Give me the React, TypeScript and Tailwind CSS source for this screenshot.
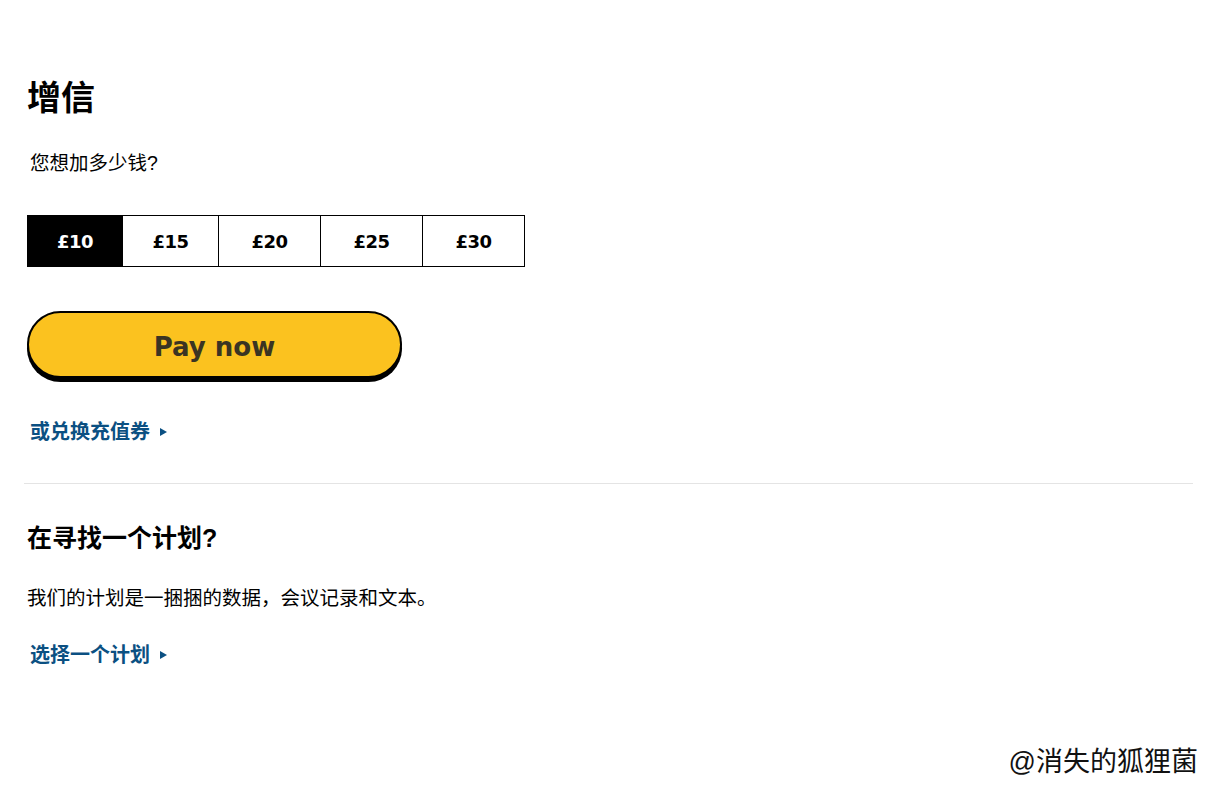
import { useState } from "react";

const AMOUNTS = [
  { value: 10, width: "w-[96px]" },
  { value: 15, width: "w-[96px]" },
  { value: 20, width: "w-[102px]" },
  { value: 25, width: "w-[102px]" },
  { value: 30, width: "w-[102px]" },
];

const CJK = "font-['Liberation_Sans','Noto_Sans_CJK_SC',sans-serif]";

function MoreLink({ label }: { label: string }) {
  return (
    <a
      href="#"
      className={`flex items-center gap-[10px] text-[20px] leading-[26px] font-bold text-[#0b5082] ${CJK}`}
    >
      {label}
      <svg width="7" height="8" viewBox="0 0 7 8">
        <path d="M0 0 L7 4 L0 8 Z" fill="#0b5082" />
      </svg>
    </a>
  );
}

export default function App() {
  const [amount, setAmount] = useState(10);

  return (
    <div className={`relative min-h-[791px] bg-white text-black ${CJK}`}>
      <div className="px-[27px] pt-[76px]">
        <h1 className="text-[34px] font-bold leading-[44px]">增信</h1>
        <p className="mt-[31px] pl-[3px] text-[19.5px] leading-[24px]">您想加多少钱?</p>

        <div className="mt-[40px] flex">
          {AMOUNTS.map((a, i) => (
            <button
              key={a.value}
              onClick={() => setAmount(a.value)}
              className={`${a.width} h-[52px] border-y border-black ${
                i === 0 ? "border-l" : ""
              } border-r font-['DejaVu_Sans',sans-serif] text-[18px] font-bold tracking-[-0.5px] ${
                amount === a.value ? "bg-black text-white" : "bg-white text-black"
              }`}
            >
              £{a.value}
            </button>
          ))}
        </div>

        <button className="mt-[44px] flex h-[67px] w-[375px] items-center justify-center rounded-full border-2 border-black bg-[#fbc21f] pt-[5px] font-['DejaVu_Sans',sans-serif] text-[26px] font-bold text-[#3a3423] shadow-[0_4px_0_#000]">
          Pay now
        </button>

        <div className="mt-[41px] pl-[3px]">
          <MoreLink label="或兑换充值券" />
        </div>

        <hr className="mt-[38px] mr-[-8px] ml-[-3px] border-t border-[#e4e4e4]" />

        <h2 className="mt-[38px] text-[25px] font-bold leading-[32px]">在寻找一个计划?</h2>
        <p className="mt-[32px] text-[19.5px] leading-[24px]">
          我们的计划是一捆捆的数据，会议记录和文本。
        </p>
        <div className="mt-[32px] pl-[3px]">
          <MoreLink label="选择一个计划" />
        </div>
      </div>

      <div className="absolute right-[14px] top-[745px] text-[27px] leading-[34px] text-[#111]">
        @消失的狐狸菌
      </div>
    </div>
  );
}
